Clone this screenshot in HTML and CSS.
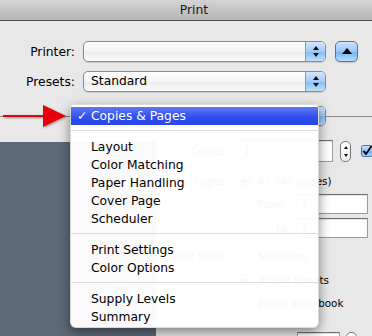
FILE: index.html
```html
<!DOCTYPE html>
<html>
<head>
<meta charset="utf-8">
<title>Print</title>
<link rel="stylesheet" href="styles.css">
</head>
<body>
<div class="window">
  <div class="titlebar">Print</div>

  <div class="form">
    <div class="row">
      <span class="lbl">Printer:</span>
      <div class="popup">
        <span class="popup-text"></span>
        <span class="popup-arrows"><i class="tri-up"></i><i class="tri-down"></i></span>
      </div>
      <button class="disclose" type="button"><i class="disc-tri"></i></button>
    </div>
    <div class="row row2">
      <span class="lbl">Presets:</span>
      <div class="popup">
        <span class="popup-text">Standard</span>
        <span class="popup-arrows"><i class="tri-up"></i><i class="tri-down"></i></span>
      </div>
    </div>
  </div>

  <div class="pane-bar">
    <div class="popup pane-popup">
      <span class="popup-text">Copies &amp; Pages</span>
      <span class="popup-arrows"><i class="tri-up"></i><i class="tri-down"></i></span>
    </div>
  </div>

  <div class="content">
    <div class="preview"></div>
    <div class="options">
      <div class="opt opt-copies">
        <span class="olbl">Copies:</span>
        <span class="field field-copies">1</span>
        <span class="stepper"><i class="st-up"></i><i class="st-down"></i></span>
        <svg class="check" width="12" height="12" viewBox="0 0 12 12">
          <defs>
            <linearGradient id="cb" x1="0" y1="0" x2="0" y2="1">
              <stop offset="0" stop-color="#cfe3fb"/>
              <stop offset="0.5" stop-color="#8fc2f5"/>
              <stop offset="0.51" stop-color="#6aaef2"/>
              <stop offset="1" stop-color="#b5dbfb"/>
            </linearGradient>
          </defs>
          <rect x="0.5" y="0.5" width="11" height="11" rx="2" fill="url(#cb)" stroke="#4d6fa8"/>
          <path d="M2.5 6 L5 9 L10.5 1" fill="none" stroke="#000" stroke-width="1.8"/>
        </svg>
      </div>
      <div class="opt opt-pages">
        <span class="olbl">Pages:</span>
        <span class="radio radio-on"></span>
        <span class="otext">All</span>
        <span class="otext note">(All pages)</span>
      </div>
      <div class="opt opt-from">
        <span class="olbl"></span>
        <span class="radio"></span>
        <span class="otext sublbl">From:</span>
        <span class="field field-range">1</span>
      </div>
      <div class="opt opt-to">
        <span class="olbl"></span>
        <span class="otext sublbl-to">to:</span>
        <span class="field field-range">1</span>
      </div>
      <div class="opt opt-what">
        <span class="olbl">Print What:</span>
        <span class="radio"></span>
        <span class="otext">Selection</span>
      </div>
      <div class="opt opt-active">
        <span class="olbl"></span>
        <span class="radio radio-on"></span>
        <span class="otext">Active Sheets</span>
      </div>
      <div class="opt opt-entire">
        <span class="olbl"></span>
        <span class="radio"></span>
        <span class="otext">Entire Workbook</span>
      </div>
      <div class="opt opt-scaling">
        <span class="olbl">Scaling:</span>
        <span class="box"></span>
        <span class="otext sublbl-fit">Fit to:</span>
        <span class="field field-fit">1</span>
        <span class="stepper"><i class="st-up"></i><i class="st-down"></i></span>
      </div>
    </div>
  </div>

  <svg class="pointer" width="72" height="32" viewBox="0 0 72 32">
    <line x1="3" y1="16" x2="46" y2="16" stroke="#e8000b" stroke-width="2.2"/>
    <polygon points="43,5 66,16 43,27" fill="#e8000b"/>
  </svg>

  <div class="menu">
    <div class="mi sel"><span class="tick">✓</span>Copies &amp; Pages</div>
    <div class="sep"></div>
    <div class="mi">Layout</div>
    <div class="mi">Color Matching</div>
    <div class="mi">Paper Handling</div>
    <div class="mi">Cover Page</div>
    <div class="mi">Scheduler</div>
    <div class="sep"></div>
    <div class="mi">Print Settings</div>
    <div class="mi">Color Options</div>
    <div class="sep"></div>
    <div class="mi">Supply Levels</div>
    <div class="mi">Summary</div>
  </div>
</div>
</body>
</html>
```

FILE: styles.css
```css
* { box-sizing: border-box; }

html, body {
  margin: 0;
  padding: 0;
}

body {
  width: 372px;
  height: 336px;
  overflow: hidden;
  background: #e8e8e8;
  font-family: "DejaVu Sans", sans-serif;
  font-size: 12.3px;
  color: #000;
}

.window {
  position: relative;
  width: 372px;
  height: 336px;
  overflow: hidden;
}

/* ---------- title bar ---------- */
.titlebar {
  height: 21px;
  line-height: 20px;
  padding-left: 16px;
  text-align: center;
  color: #1a1a1a;
  background: linear-gradient(#d4d4d4, #b5b5b5);
  border-bottom: 1px solid #4f4f4f;
}

/* ---------- top form ---------- */
.form {
  padding-top: 20px;
}

.row {
  display: flex;
  align-items: center;
  height: 21px;
}

.row2 {
  margin-top: 9px;
}

.lbl {
  width: 75px;
  margin-right: 8px;
  text-align: right;
  flex: none;
}

.popup {
  position: relative;
  display: flex;
  width: 243px;
  height: 21px;
  flex: none;
  border: 1px solid #8a8a8a;
  border-radius: 5px;
  overflow: hidden;
  background: linear-gradient(#ffffff, #f4f4f4 50%, #ebebeb 51%, #fbfbfb);
  box-shadow: 0 1px 1px rgba(0, 0, 0, 0.12);
}

.popup-text {
  flex: 1;
  padding-left: 7px;
  line-height: 19px;
  white-space: nowrap;
}

.popup-arrows {
  width: 20px;
  flex: none;
  display: flex;
  flex-direction: column;
  align-items: center;
  justify-content: center;
  gap: 3px;
  border-left: 1px solid #7d9bc8;
  background: linear-gradient(#d3e5fb, #a3cbf6 50%, #84bbf3 51%, #bfe0fc);
}

.tri-up {
  width: 0;
  height: 0;
  border-left: 3px solid transparent;
  border-right: 3px solid transparent;
  border-bottom: 4px solid #111;
}

.tri-down {
  width: 0;
  height: 0;
  border-left: 3px solid transparent;
  border-right: 3px solid transparent;
  border-top: 4px solid #111;
}

.disclose {
  width: 23px;
  height: 21px;
  margin: 0 0 0 9px;
  padding: 0;
  flex: none;
  display: flex;
  align-items: center;
  justify-content: center;
  border: 1px solid #4f74b3;
  border-radius: 5px;
  background: linear-gradient(#cfe3fb, #98c6f6 50%, #72b2f3 51%, #b6dbfb);
  box-shadow: 0 1px 1px rgba(0, 0, 0, 0.15);
}

.disc-tri {
  width: 0;
  height: 0;
  border-left: 5px solid transparent;
  border-right: 5px solid transparent;
  border-bottom: 6px solid #000;
  margin-top: -1px;
}

/* ---------- pane selector bar ---------- */
.pane-bar {
  position: relative;
  height: 20px;
  margin-top: 14px;
}

.pane-bar::before {
  content: "";
  position: absolute;
  left: 0;
  right: 0;
  top: 10px;
  height: 1px;
  background: #8c8c8c;
}

.pane-popup {
  height: 20px;
  margin-left: 83px;
}

/* ---------- content ---------- */
.content {
  display: flex;
  height: 210px;
}

.preview {
  width: 156px;
  flex: none;
  margin-top: 16px;
  background: #5d6978;
}

.options {
  flex: 1;
  padding-top: 14px;
  font-size: 10.4px;
}

.opt {
  display: flex;
  align-items: center;
  height: 18px;
  white-space: nowrap;
}

.olbl {
  width: 73px;
  margin-right: 10px;
  flex: none;
  text-align: right;
}

.otext {
  flex: none;
}

.opt-copies {
  height: 22px;
}

.field {
  flex: none;
  display: block;
  background: #fff;
  border: 1px solid #9b9b9b;
  border-top-color: #6f6f6f;
  box-shadow: inset 0 1px 1px rgba(0, 0, 0, 0.12);
  padding-left: 4px;
  line-height: 18px;
}

.field-copies {
  width: 94px;
  height: 22px;
  line-height: 20px;
}

.stepper {
  flex: none;
  width: 11px;
  height: 21px;
  margin-left: 7px;
  display: flex;
  flex-direction: column;
  align-items: center;
  justify-content: center;
  gap: 5px;
  border: 1px solid #777;
  border-radius: 5px;
  background: linear-gradient(#ffffff, #eeeeee);
}

.st-up {
  width: 0;
  height: 0;
  border-left: 2px solid transparent;
  border-right: 2px solid transparent;
  border-bottom: 3px solid #111;
}

.st-down {
  width: 0;
  height: 0;
  border-left: 2px solid transparent;
  border-right: 2px solid transparent;
  border-top: 3px solid #111;
}

.check {
  flex: none;
  margin-left: 10px;
  display: block;
}

.opt-pages {
  margin-top: 10px;
}

.radio {
  flex: none;
  width: 12px;
  height: 12px;
  margin-right: 7px;
  border: 1px solid #7c7c7c;
  border-radius: 50%;
  background: linear-gradient(#ffffff, #e6e6e6);
}

.radio-on {
  border-color: #4d6fa8;
  background: radial-gradient(circle, #000 0 2px, transparent 2.5px), linear-gradient(#cfe3fb, #8fc2f5 50%, #6aaef2 51%, #b5dbfb);
}

.note {
  margin-left: 5px;
}

.opt-from {
  height: 20px;
  margin-top: 4px;
}

.sublbl {
  width: 38px;
}

.field-range {
  width: 72px;
  height: 20px;
}

.opt-to {
  height: 20px;
  margin-top: 4px;
}

.sublbl-to {
  width: 57px;
  padding-right: 6px;
  text-align: right;
}

.opt-what {
  margin-top: 9px;
}

.opt-active {
  margin-top: 6px;
}

.opt-entire {
  margin-top: 5px;
}

.opt-scaling {
  height: 20px;
  margin-top: 20px;
}

.box {
  flex: none;
  width: 12px;
  height: 12px;
  margin-left: 1px;
  margin-right: 6px;
  border: 1px solid #7c7c7c;
  border-radius: 2px;
  background: linear-gradient(#ffffff, #e6e6e6);
}

.sublbl-fit {
  width: 39px;
}

.field-fit {
  width: 43px;
  height: 20px;
}

.opt-scaling .stepper {
  margin-left: 6px;
}

/* ---------- red pointer ---------- */
.pointer {
  position: absolute;
  left: 0;
  top: 100px;
  filter: drop-shadow(1px 1.5px 1px rgba(0, 0, 0, 0.35));
}

/* ---------- dropdown menu ---------- */
.menu {
  position: absolute;
  left: 70px;
  top: 104px;
  width: 249px;
  padding: 2px 0 1px;
  font-size: 12.3px;
  background: rgba(255, 255, 255, 0.97);
  border: 1px solid rgba(0, 0, 0, 0.14);
  border-radius: 4px 4px 6px 6px;
  box-shadow: 0 4px 12px rgba(0, 0, 0, 0.45);
}

.mi {
  position: relative;
  height: 18px;
  line-height: 18px;
  padding-left: 20px;
  white-space: nowrap;
  color: #000;
}

.mi.sel {
  color: #fff;
  background: linear-gradient(#5f78f4, #2f4cec 60%, #2846ea);
}

.tick {
  position: absolute;
  left: 6px;
  top: 0;
  font-weight: bold;
}

.sep {
  position: relative;
  height: 13px;
}

.sep::after {
  content: "";
  position: absolute;
  left: 0;
  right: 0;
  top: 5px;
  height: 1px;
  background: #dcdcdc;
}
```
